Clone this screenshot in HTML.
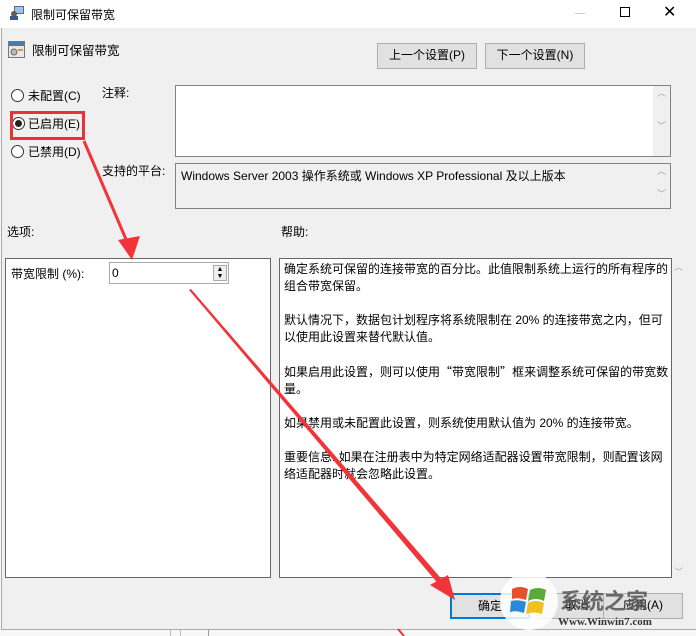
<!DOCTYPE html>
<html><head><meta charset="utf-8"><style>
*{margin:0;padding:0;box-sizing:border-box}
body{width:696px;height:636px;background:#f7f7f7;font-family:"Liberation Sans","Noto Sans CJK SC",sans-serif;font-size:12px;color:#000;position:relative;overflow:hidden}
.a{position:absolute;white-space:nowrap}
.btn{position:absolute;background:#e1e1e1;border:1px solid #adadad;text-align:center;line-height:23px}
.rad{position:absolute;width:13px;height:13px;border:1px solid #333;border-radius:50%;background:#fff}
.box{position:absolute;border:1px solid #828282;background:#fff}
.sb{position:absolute;right:0;top:0;bottom:0;width:17px;background:#f0f0f0;color:#a0a0a0;font-size:9px;text-align:center}
.q{font-family:"Noto Sans CJK SC",sans-serif}
</style></head><body>
<div class="a" style="left:1px;top:0;width:695px;height:630px;background:#f0f0f0;border-left:1px solid #aaa;border-bottom:1px solid #aaa"></div>
<div class="a" style="left:170px;top:630px;width:1px;height:6px;background:#bbb"></div>
<div class="a" style="left:180px;top:630px;width:1px;height:6px;background:#bbb"></div>
<div class="a" style="left:208px;top:630px;width:1px;height:6px;background:#999"></div>
<div class="a" style="left:0;top:0;width:696px;height:28px;background:#fff"></div>
<svg class="a" style="left:9px;top:5px" width="16" height="16"><rect x="5" y="1" width="10" height="8" fill="#4a6f9a"/><rect x="6" y="2" width="8" height="6" fill="#9cc3e8"/><circle cx="5" cy="9" r="3" fill="#6b5a4a"/><rect x="1" y="11" width="8" height="4" fill="#3a5a8a"/></svg>
<div class="a" style="left:31px;top:6px">限制可保留带宽</div>
<div class="a" style="left:575px;top:13px;width:10px;height:1px;background:#ccc"></div>
<div class="a" style="left:620px;top:7px;width:10px;height:10px;border:1px solid #000"></div>
<div class="a" style="left:663px;top:2px;font-size:16px">✕</div>
<svg class="a" style="left:8px;top:41px" width="17" height="17"><rect x="0.5" y="0.5" width="16" height="16" fill="#e8e8e8" stroke="#777"/><rect x="1" y="1" width="15" height="4" fill="#4a7aa8"/><circle cx="6" cy="11" r="3" fill="#bbb" stroke="#666"/><rect x="10" y="8" width="5" height="2" fill="#d89a2a"/></svg>
<div class="a" style="left:32px;top:40px;font-size:12.5px">限制可保留带宽</div>
<div class="btn" style="left:377px;top:43px;width:100px;height:26px">上一个设置(P)</div>
<div class="btn" style="left:485px;top:43px;width:100px;height:26px">下一个设置(N)</div>
<div class="rad" style="left:11px;top:89px"></div><div class="a" style="left:28px;top:87px">未配置(C)</div>
<div class="rad" style="left:12px;top:117px"></div><div class="a" style="left:15px;top:120px;width:7px;height:7px;border-radius:50%;background:#222"></div><div class="a" style="left:28px;top:115px">已启用(E)</div>
<div class="rad" style="left:11px;top:145px"></div><div class="a" style="left:28px;top:143px">已禁用(D)</div>
<div class="a" style="left:10px;top:111px;width:75px;height:29px;border:3px solid #e8323a"></div>
<div class="a" style="left:102px;top:84px">注释:</div>
<div class="box" style="left:175px;top:85px;width:496px;height:72px"><div class="sb">︿<br><br><br>﹀</div></div>
<div class="a" style="left:102px;top:162px">支持的平台:</div>
<div class="box" style="left:175px;top:163px;width:496px;height:46px;background:#f0f0f0"><div class="a" style="left:5px;top:3px">Windows Server 2003 操作系统或 Windows XP Professional 及以上版本</div><div class="sb">︿<br><br>﹀</div></div>
<div class="a" style="left:7px;top:223px">选项:</div>
<div class="a" style="left:281px;top:223px">帮助:</div>
<div class="box" style="left:5px;top:258px;width:266px;height:320px;border-color:#666"></div>
<div class="a" style="left:11px;top:265px">带宽限制 (%):</div>
<div class="box" style="left:109px;top:262px;width:120px;height:22px;border-color:#aaa"><div class="a" style="left:2px;top:3px">0</div><div class="a" style="left:103px;top:2px;width:14px;height:16px;border:1px solid #aaa;background:#eee;font-size:7px;line-height:7px;text-align:center">▲<br>▼</div></div>
<div class="box" style="left:279px;top:258px;width:393px;height:320px;border-color:#666"><div class="a" style="left:4px;top:2px;line-height:17px;white-space:normal;width:386px;font-size:12px">确定系统可保留的连接带宽的百分比。此值限制系统上运行的所有程序的组合带宽保留。<br><br>默认情况下，数据包计划程序将系统限制在 20% 的连接带宽之内，但可以使用此设置来替代默认值。<br><br>如果启用此设置，则可以使用<span class="q">“</span>带宽限制<span class="q">”</span>框来调整系统可保留的带宽数量。<br><br>如果禁用或未配置此设置，则系统使用默认值为 20% 的连接带宽。<br><br>重要信息: 如果在注册表中为特定网络适配器设置带宽限制，则配置该网络适配器时就会忽略此设置。</div></div>
<div class="a" style="left:674px;top:260px;color:#aaa;font-size:9px">︿</div>
<div class="a" style="left:674px;top:565px;color:#aaa;font-size:9px">﹀</div>
<div class="btn" style="left:450px;top:593px;width:80px;height:26px;border:2px solid #0078d7">确定</div>
<div class="btn" style="left:537px;top:593px;width:80px;height:26px">取消</div>
<div class="btn" style="left:603px;top:593px;width:80px;height:26px">应用(A)</div>
<div class="a" style="left:500px;top:572px;width:58px;height:58px;border-radius:50%;background:rgba(255,255,255,.85)"></div>
<svg class="a" style="left:510px;top:585px" width="38" height="32"><path d="M2 4 Q10 0 18 4 L16 15 Q8 12 2 14Z" fill="#e8502a"/><path d="M20 5 Q28 1 36 5 L34 16 Q26 12 18 16Z" fill="#5aaa3a"/><path d="M1 16 Q8 14 16 17 L14 28 Q6 25 0 27Z" fill="#2a8ad8"/><path d="M18 18 Q26 14 34 18 L32 29 Q24 26 16 29Z" fill="#f0c020"/></svg>
<div class="a" style="left:560px;top:584px;font-size:22px;font-weight:bold;color:#555;opacity:.85">系统之家</div>
<div class="a" style="left:558px;top:616px;font-size:11px;font-family:'Liberation Serif',serif;font-weight:bold;color:#333">Www.Winwin7.com</div>
<svg class="a" style="left:0;top:0" width="696" height="636"><g fill="#f0343a" stroke="#f0343a"><line x1="84" y1="141" x2="128" y2="244" stroke-width="3"/><polygon points="118,240 140,236 132,260" stroke="none"/><polygon points="189,290 191,289 445,583 441,587" stroke="none"/><polygon points="430,585 455,600 448,575" stroke="none"/><line x1="398" y1="629" x2="404" y2="636" stroke-width="2"/></g></svg>
</body></html>
